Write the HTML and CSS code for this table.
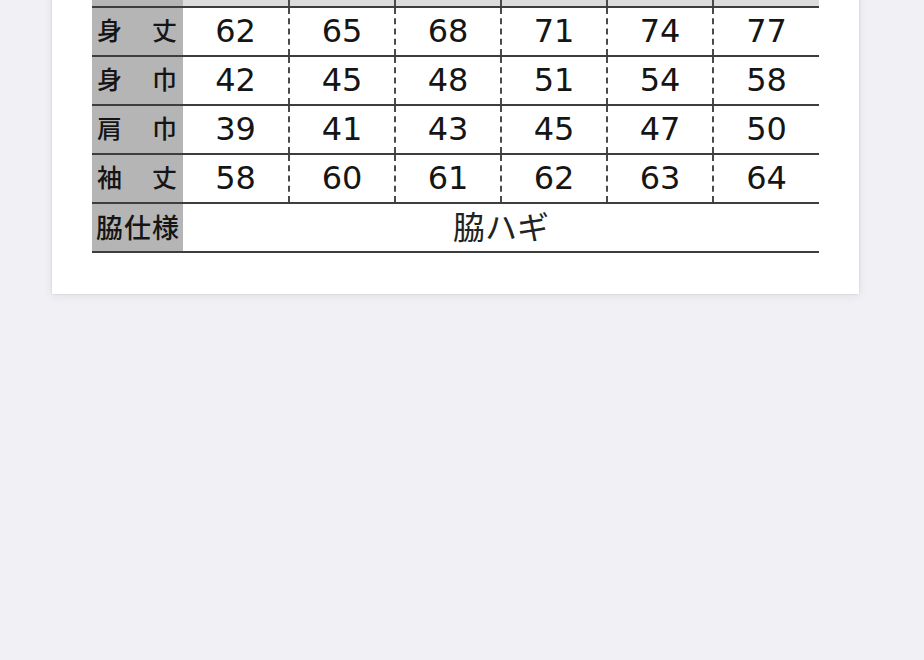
FILE: index.html
```html
<!DOCTYPE html>
<html lang="ja">
<head>
<meta charset="utf-8">
<title>サイズ表</title>
<link rel="stylesheet" href="styles.css">
</head>
<body>
<div class="page">
  <div class="card">
    <table class="size-table">
      <colgroup>
        <col class="col-label">
        <col class="col-size"><col class="col-size"><col class="col-size">
        <col class="col-size"><col class="col-size"><col class="col-size">
      </colgroup>
      <tr class="head">
        <th></th>
        <td></td><td></td><td></td><td></td><td></td><td></td>
      </tr>
      <tr>
        <th><div class="label"><span>身</span><span>丈</span></div></th>
        <td>62</td><td>65</td><td>68</td><td>71</td><td>74</td><td>77</td>
      </tr>
      <tr>
        <th><div class="label"><span>身</span><span>巾</span></div></th>
        <td>42</td><td>45</td><td>48</td><td>51</td><td>54</td><td>58</td>
      </tr>
      <tr>
        <th><div class="label"><span>肩</span><span>巾</span></div></th>
        <td>39</td><td>41</td><td>43</td><td>45</td><td>47</td><td>50</td>
      </tr>
      <tr>
        <th><div class="label"><span>袖</span><span>丈</span></div></th>
        <td>58</td><td>60</td><td>61</td><td>62</td><td>63</td><td>64</td>
      </tr>
      <tr>
        <th><div class="label tight"><span>脇</span><span>仕</span><span>様</span></div></th>
        <td class="merged" colspan="6">脇ハギ</td>
      </tr>
    </table>
  </div>
</div>
</body>
</html>
```

FILE: styles.css
```css
html, body {
  margin: 0;
  padding: 0;
}
body {
  background: #f1f0f5;
  font-family: "Noto Sans CJK JP", "Noto Sans", sans-serif;
  color: #1c1c1c;
  height: 660px;
  overflow: hidden;
}
.page {
  padding-left: 52px;
}
.card {
  width: 807px;
  box-sizing: border-box;
  margin-top: -83px;
  padding: 40px 39px 41px 40px;
  background: #ffffff;
  box-shadow: 0 0 2px rgba(0, 0, 0, 0.12), 0 2px 10px rgba(0, 0, 0, 0.07);
}
.size-table {
  border-collapse: collapse;
  width: 727px;
  table-layout: fixed;
}
.col-label {
  width: 91px;
}
.col-size {
  width: 106px;
}
.size-table th,
.size-table td {
  padding: 0;
  border-top: 2px solid #3d3d3d;
  border-bottom: 2px solid #3d3d3d;
  height: 47px;
  vertical-align: middle;
}
.size-table th {
  background: #b5b5b5;
}
.label {
  display: flex;
  justify-content: space-between;
  padding: 0 6px 4px 5px;
  font-family: "Noto Sans CJK JP", sans-serif;
  font-weight: 500;
  font-size: 25px;
  line-height: 1;
  color: #151515;
}
.label.tight {
  padding: 0 4px 3px 4px;
  font-size: 27px;
}
.size-table td {
  text-align: center;
  font-family: "DejaVu Sans", "Noto Sans", sans-serif;
  font-size: 32px;
  line-height: 1;
  color: #151515;
  height: 45px;
  padding-bottom: 2px;
  border-left: 2px dashed #4a4a4a;
}
.size-table th + td {
  border-left: none;
}
.size-table tr.head td {
  background: #dcdcdc;
}
.size-table td.merged {
  border-left: none;
  font-family: "Noto Sans CJK JP", sans-serif;
  font-size: 32px;
  font-weight: 400;
  height: 42px;
  padding-bottom: 5px;
  color: #222;
}
```
